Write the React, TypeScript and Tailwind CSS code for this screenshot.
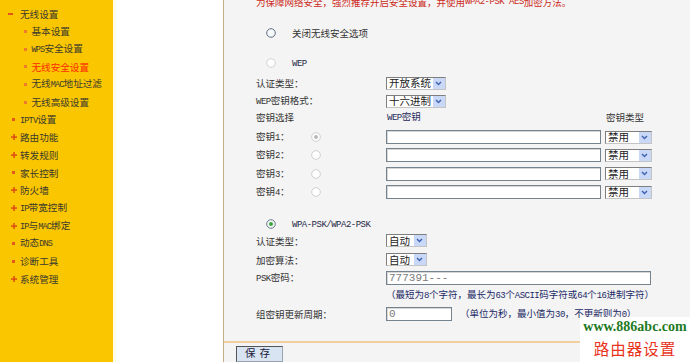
import React from "react";

const LAT_SIDE = "font-['Liberation_Mono',monospace] text-[8.5px] tracking-[-0.8px]";
const LAT_MAIN = "font-['Liberation_Mono',monospace] text-[9px] tracking-[-0.5px]";

function T({ s, side }: { s: string; side?: boolean }) {
  const parts = s.split(/([\x20-\x7E]+)/);
  return (
    <>
      {parts.map((p, i) =>
        p === "" ? null : /[\x20-\x7E]/.test(p) ? (
          <span key={i} className={side ? LAT_SIDE : LAT_MAIN}>
            {p}
          </span>
        ) : (
          <React.Fragment key={i}>{p}</React.Fragment>
        )
      )}
    </>
  );
}

type Item = { t: string; kind: "open" | "sub" | "plus" | "dot"; active?: boolean };

const items: Item[] = [
  { t: "无线设置", kind: "open" },
  { t: "基本设置", kind: "sub" },
  { t: "WPS安全设置", kind: "sub" },
  { t: "无线安全设置", kind: "sub", active: true },
  { t: "无线MAC地址过滤", kind: "sub" },
  { t: "无线高级设置", kind: "sub" },
  { t: "IPTV设置", kind: "dot" },
  { t: "路由功能", kind: "plus" },
  { t: "转发规则", kind: "plus" },
  { t: "家长控制", kind: "dot" },
  { t: "防火墙", kind: "plus" },
  { t: "IP带宽控制", kind: "plus" },
  { t: "IP与MAC绑定", kind: "plus" },
  { t: "动态DNS", kind: "dot" },
  { t: "诊断工具", kind: "dot" },
  { t: "系统管理", kind: "plus" },
];

function Marker({ kind }: { kind: Item["kind"] }) {
  if (kind === "open")
    return (
      <div className="ml-[8px] mr-[7px] flex w-[5px] items-center">
        <div className="h-[1.5px] w-[5px] bg-[#e0561a]" />
      </div>
    );
  if (kind === "sub")
    return (
      <div className="ml-[24px] mr-[4.5px] flex w-[3px] items-center">
        <div className="h-[3px] w-[3px] bg-[#ee7a2c]" />
      </div>
    );
  if (kind === "dot")
    return (
      <div className="ml-[12px] mr-[5px] flex w-[3px] items-center">
        <div className="h-[3px] w-[3px] bg-[#e55a1c]" />
      </div>
    );
  return (
    <svg width="6" height="6" viewBox="0 0 6 6" className="ml-[11px] mr-[3px]">
      <rect x="0" y="2.3" width="6" height="1.5" fill="#dd4a14" />
      <rect x="2.3" y="0" width="1.5" height="6" fill="#dd4a14" />
    </svg>
  );
}

function Radio({ ring, dot, fill = "#ffffff" }: { ring: string; dot?: string; fill?: string }) {
  return (
    <svg width="10" height="10" viewBox="0 0 10 10" className="shrink-0">
      <circle cx="5" cy="5" r="4.3" fill={fill} stroke={ring} strokeWidth="1" />
      {dot && <circle cx="5" cy="5" r="2" fill={dot} />}
    </svg>
  );
}

function Select({ text, w }: { text: string; w: string }) {
  return (
    <div
      className={`flex h-[13px] ${w} shrink-0 items-center border border-[#c4c4c4] border-l-[#7e7e7e] border-t-[#7e7e7e] bg-white pl-[2px]`}
    >
      <span className="flex-1 text-[10.5px] leading-[12px] text-[#222]">{text}</span>
      <div className="mr-[0.5px] flex h-[11px] w-[12px] items-center justify-center bg-[#c9d8f6]">
        <svg width="7" height="5" viewBox="0 0 7 5">
          <path d="M1 1 L3.5 3.6 L6 1" fill="none" stroke="#3f62b4" strokeWidth="1.4" />
        </svg>
      </div>
    </div>
  );
}

function Input({ w, value }: { w: string; value?: string }) {
  return (
    <div
      className={`flex h-[14px] ${w} shrink-0 items-center border border-[#75838f] bg-white pl-[2px] shadow-[inset_1px_1px_0_#d6d6d6]`}
    >
      {value && (
        <span className="font-['Liberation_Mono',monospace] text-[11px] leading-[12px] text-[#7a7a7a]">{value}</span>
      )}
    </div>
  );
}

export default function App() {
  return (
    <div className="flex h-[362px] w-[690px] overflow-hidden font-['Noto_Sans_CJK_SC','Liberation_Sans',sans-serif]">
      <aside className="flex w-[113px] shrink-0 flex-col bg-[#fac600] pt-[5px]">
        {items.map((it) => (
          <div key={it.t} className="flex h-[17.67px] items-center">
            <Marker kind={it.kind} />
            <span
              className={`whitespace-nowrap text-[9.6px] leading-[12px] ${
                it.active ? "text-[#ff2a00]" : "text-[#3a3a2e]"
              }`}
            >
              <T s={it.t} side />
            </span>
          </div>
        ))}
      </aside>
      <div className="w-[110px] shrink-0 border-l-[3px] border-[#fffbe4] bg-white" />
      <div className="w-[1px] shrink-0 bg-[#c9ad86]" />
      <main className="relative flex flex-1 flex-col bg-[#f4f4f4]">
        <div className="flex h-[346px] flex-col overflow-hidden pl-[32px] text-[9.5px] leading-[12px] text-[#333]">
          <div className="-mt-[4px] flex h-[12px] items-center whitespace-nowrap text-[#cc2a22]">
            <T s="为保障网络安全，强烈推荐开启安全设置，并使用WPA2-PSK AES加密方法。" />
          </div>
          <div className="mt-[19px] flex h-[12px] items-center">
            <div className="ml-[10px]">
              <Radio ring="#5f6f80" fill="#f6f8fa" />
            </div>
            <span className="ml-[16px]">关闭无线安全选项</span>
          </div>
          <div className="mt-[18px] flex h-[12px] items-center">
            <div className="ml-[10px]">
              <Radio ring="#d2d2d2" />
            </div>
            <span className="ml-[16px] text-[#1f2a48]">
              <T s="WEP" />
            </span>
          </div>
          <div className="mt-[7px] flex h-[14px] items-center">
            <span className="w-[130px] shrink-0">认证类型：</span>
            <Select text="开放系统" w="w-[60px]" />
          </div>
          <div className="mt-[4px] flex h-[14px] items-center">
            <span className="w-[130px] shrink-0">
              <T s="WEP密钥格式：" />
            </span>
            <Select text="十六进制" w="w-[60px]" />
          </div>
          <div className="mt-[3px] flex h-[12px] items-center">
            <span className="w-[131px] shrink-0">密钥选择</span>
            <span className="w-[219px] shrink-0 text-[#1f2a5a]">
              <T s="WEP密钥" />
            </span>
            <span>密钥类型</span>
          </div>
          <div className="mt-[5px] flex flex-col">
            {[1, 2, 3, 4].map((n) => (
              <div key={n} className="flex h-[18.33px] items-center">
                <span className="w-[55px] shrink-0">
                  <T s={`密钥${n}：`} />
                </span>
                <div className="w-[75px] shrink-0">
                  <Radio ring="#cfcfcf" dot={n === 1 ? "#b8b8b8" : undefined} />
                </div>
                <Input w="w-[215px]" />
                <div className="ml-[4px]">
                  <Select text="禁用" w="w-[47px]" />
                </div>
              </div>
            ))}
          </div>
          <div className="mt-[17px] flex h-[12px] items-center">
            <div className="ml-[10px]">
              <Radio ring="#6c7a88" dot="#3fa544" fill="#f4f8f4" />
            </div>
            <span className="ml-[16px] text-[#1f2a48]">
              <T s="WPA-PSK/WPA2-PSK" />
            </span>
          </div>
          <div className="mt-[4px] flex h-[13px] items-center">
            <span className="w-[130px] shrink-0">认证类型：</span>
            <Select text="自动" w="w-[41px]" />
          </div>
          <div className="mt-[6px] flex h-[13px] items-center">
            <span className="w-[130px] shrink-0">加密算法：</span>
            <Select text="自动" w="w-[41px]" />
          </div>
          <div className="mt-[5px] flex h-[14px] items-center">
            <span className="w-[130px] shrink-0">
              <T s="PSK密码：" />
            </span>
            <Input w="w-[265px]" value="777391---" />
          </div>
          <div className="mt-[4px] flex h-[12px] items-center">
            <span className="ml-[130px] whitespace-nowrap text-[#1c2a66]">
              <T s="（最短为8个字符，最长为63个ASCII码字符或64个16进制字符）" />
            </span>
          </div>
          <div className="mt-[6px] flex h-[14px] items-center">
            <span className="w-[130px] shrink-0">组密钥更新周期：</span>
            <Input w="w-[66px]" value="0" />
            <span className="ml-[8px] whitespace-nowrap text-[#1c2a66]">
              <T s="（单位为秒，最小值为30，不更新则为0）" />
            </span>
          </div>
        </div>
        <div className="h-[2px] bg-[#f0cf9f]" />
        <div className="flex-1 pl-[12px] pt-[3px]">
          <button className="flex h-[16px] w-[47px] items-start justify-center border border-[#9aa4ae] border-l-[#555] border-t-[#555] bg-[#d9e4f2] text-[10.5px] leading-[12px] tracking-[4px] text-[#1a1a3a]">
            保存
          </button>
        </div>
        <div className="absolute left-[356px] top-[317px] flex h-[45px] w-[110px] flex-col items-center bg-white">
          <span className="mt-[2px] font-['Liberation_Serif',serif] text-[14px] font-bold leading-[16px] text-[#1f7a24]">
            www.886abc.com
          </span>
          <span className="mt-[4px] text-[15.5px] leading-[19px] tracking-[1px] text-[#e8341c]">路由器设置</span>
        </div>
      </main>
    </div>
  );
}
